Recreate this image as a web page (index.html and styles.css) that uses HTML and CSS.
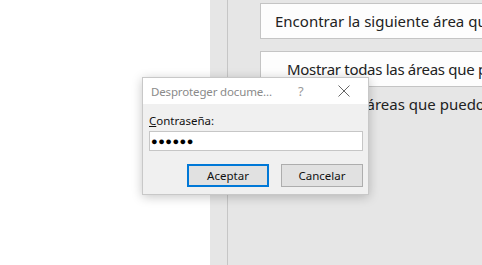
FILE: index.html
```html
<!doctype html>
<html>
  <head>
    <meta charset="utf-8">
    <title>Desproteger documento</title>
    <link rel="stylesheet" href="styles.css">
  </head>
  <body>
    <div class="doc"></div>
    <div class="gutter"></div>
    <div class="pane">
      <div class="pane-btn first">Encontrar la siguiente área que puedo editar</div>
      <div class="pane-btn second">Mostrar todas las áreas que puedo editar</div>
      <label class="check"><span class="box"></span>Resaltar las áreas que puedo editar</label>
    </div>

    <div class="dialog">
      <div class="titlebar">
        <span class="title">Desproteger docume...</span>
        <span class="help">?</span>
        <svg class="close" width="12" height="12" viewBox="0 0 12 12">
          <path d="M0.5 0.5 L11.5 11.5 M11.5 0.5 L0.5 11.5" stroke="#666" stroke-width="1" fill="none"/>
        </svg>
      </div>
      <div class="body">
        <div class="label"><u>C</u>ontraseña:</div>
        <div class="input">●●●●●●</div>
        <div class="actions">
          <button class="btn default">Aceptar</button>
          <button class="btn">Cancelar</button>
        </div>
      </div>
    </div>
  </body>
</html>
```

FILE: styles.css
```css
body {
  margin: 0;
  display: flex;
  height: 265px;
  overflow: hidden;
  font-family: "Noto Sans", "Open Sans", sans-serif;
}

.doc {
  width: 210px;
  background: #ffffff;
}

.gutter {
  width: 17px;
  background: #e6e6e6;
  border-right: 1px solid #c6c6c6;
}

.pane {
  flex: 1;
  background: #e6e6e6;
  padding: 3px 0 0 32px;
  overflow: hidden;
}

.pane-btn {
  box-sizing: border-box;
  width: 320px;
  height: 36px;
  background: #fdfdfd;
  border: 1px solid #c4c4c4;
  white-space: nowrap;
  font-size: 15px;
  color: #222;
  line-height: 34px;
}

.first {
  padding-left: 14px;
}

.second {
  margin-top: 12px;
  padding-left: 26px;
  letter-spacing: -0.3px;
}

.check {
  display: flex;
  align-items: center;
  margin: 7px 0 0 12px;
  font-size: 15px;
  color: #222;
  white-space: nowrap;
}

.check .box {
  width: 13px;
  height: 13px;
  border: 1px solid #333;
  background: #fff;
  margin-right: 8px;
}

.dialog {
  position: absolute;
  left: 142px;
  top: 77px;
  width: 225px;
  height: 116px;
  border: 1px solid #c8c8c8;
  background: #f0f0f0;
  box-shadow: 0 2px 10px rgba(0, 0, 0, 0.22);
}

.titlebar {
  display: flex;
  align-items: center;
  height: 26px;
  background: #ffffff;
  padding-left: 8px;
}

.title {
  font-size: 11.5px;
  letter-spacing: -0.15px;
  color: #8a8a8a;
  width: 147px;
}

.help {
  font-size: 13px;
  color: #9a9a9a;
  width: 40px;
}

.close {
  display: block;
}

.body {
  padding: 9px 5px 0 6px;
}

.label {
  font-size: 11.5px;
  color: #111;
  height: 18px;
}

.input {
  box-sizing: border-box;
  height: 20px;
  background: #fff;
  border: 1px solid #c6c6c6;
  font-size: 11px;
  letter-spacing: 0.5px;
  line-height: 18px;
  padding-left: 1px;
  color: #000;
}

.actions {
  display: flex;
  justify-content: flex-end;
  gap: 12px;
  margin-top: 13px;
}

.btn {
  box-sizing: border-box;
  width: 82px;
  height: 23px;
  background: #e1e1e1;
  border: 1px solid #adadad;
  font-family: "Noto Sans", "Open Sans", sans-serif;
  font-size: 11.5px;
  color: #111;
  padding: 0;
}

.default {
  border: 2px solid #0078d7;
}
```
